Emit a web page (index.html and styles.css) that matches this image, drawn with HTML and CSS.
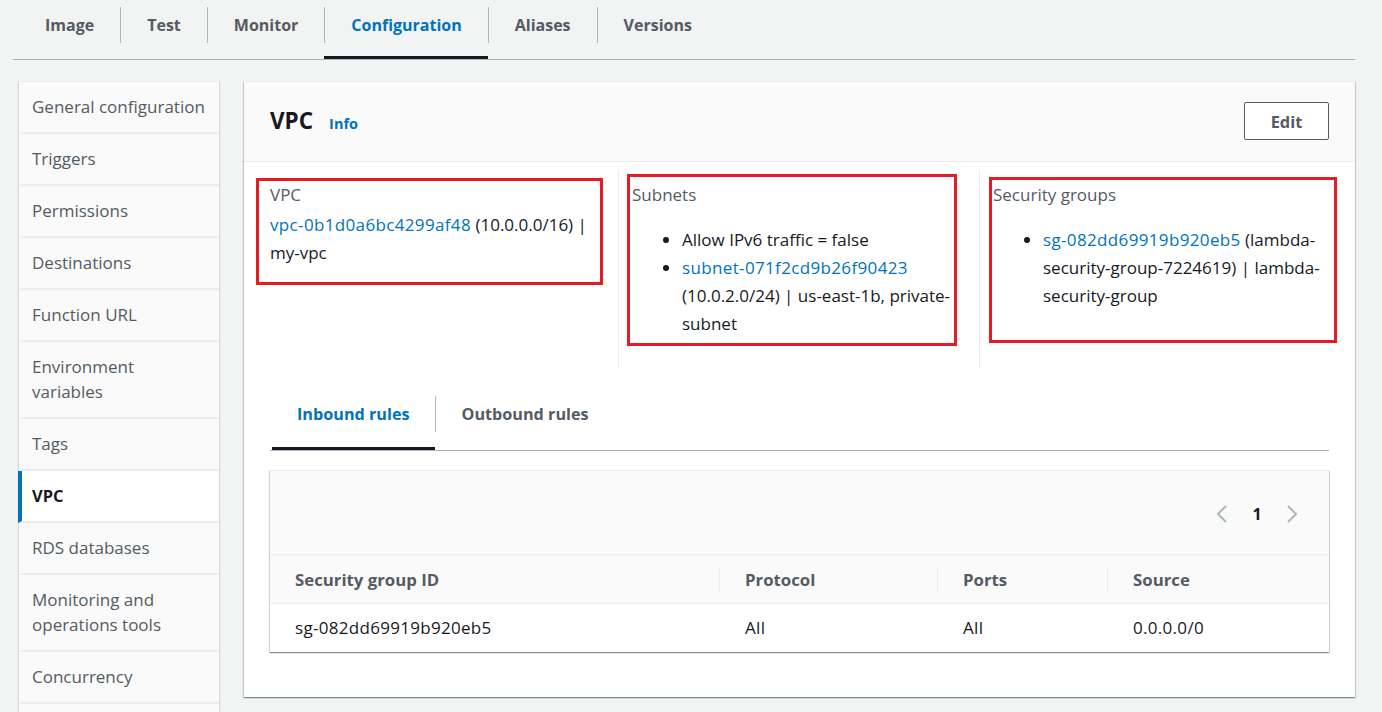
FILE: index.html
```html
<!DOCTYPE html>
<html lang="en">
<head>
<meta charset="utf-8">
<title>VPC configuration</title>
<link rel="stylesheet" href="styles.css">
</head>
<body>
<nav class="top-tabs">
  <a class="top-tab"><span class="top-tab-label">Image</span></a>
  <a class="top-tab"><span class="top-tab-label sep">Test</span></a>
  <a class="top-tab"><span class="top-tab-label sep">Monitor</span></a>
  <a class="top-tab active"><span class="top-tab-label sep">Configuration</span></a>
  <a class="top-tab"><span class="top-tab-label sep">Aliases</span></a>
  <a class="top-tab"><span class="top-tab-label sep">Versions</span></a>
</nav>

<div class="layout">
  <aside class="sidebar">
    <div class="side-item">General configuration</div>
    <div class="side-item">Triggers</div>
    <div class="side-item">Permissions</div>
    <div class="side-item">Destinations</div>
    <div class="side-item">Function URL</div>
    <div class="side-item">Environment<br>variables</div>
    <div class="side-item">Tags</div>
    <div class="side-item active">VPC</div>
    <div class="side-item">RDS databases</div>
    <div class="side-item">Monitoring and<br>operations tools</div>
    <div class="side-item">Concurrency</div>
    <div class="side-item side-item-last"></div>
  </aside>

  <main class="panel">
    <header class="panel-header">
      <div class="panel-title">
        <h2>VPC</h2>
        <a class="info">Info</a>
      </div>
      <button class="btn">Edit</button>
    </header>

    <section class="vpc-grid">
      <div class="vpc-col">
        <div class="mark mark-1">
          <div class="label">VPC</div>
          <div class="value"><a class="link">vpc-0b1d0a6bc4299af48</a> (10.0.0.0/16) | my-vpc</div>
        </div>
      </div>
      <div class="vpc-col">
        <div class="mark mark-2">
          <div class="label">Subnets</div>
          <ul class="list">
            <li>Allow IPv6 traffic = false</li>
            <li><a class="link">subnet-071f2cd9b26f90423</a> (10.0.2.0/24) | us-east-1b, private-subnet</li>
          </ul>
        </div>
      </div>
      <div class="vpc-col">
        <div class="mark mark-3">
          <div class="label">Security groups</div>
          <ul class="list">
            <li><a class="link">sg-082dd69919b920eb5</a> (lambda-security-group-7224619) | lambda-security-group</li>
          </ul>
        </div>
      </div>
    </section>

    <section class="rules">
      <nav class="rule-tabs">
        <a class="rule-tab active"><span class="rule-tab-label">Inbound rules</span></a>
        <a class="rule-tab"><span class="rule-tab-label sep">Outbound rules</span></a>
      </nav>

      <div class="table-box">
        <div class="table-tools">
          <div class="pager">
            <svg class="chev" width="12" height="18" viewBox="0 0 12 18"><polyline points="10,1 2,9 10,17" fill="none" stroke="#aab7b8" stroke-width="2"/></svg>
            <span class="page">1</span>
            <svg class="chev" width="12" height="18" viewBox="0 0 12 18"><polyline points="2,1 10,9 2,17" fill="none" stroke="#aab7b8" stroke-width="2"/></svg>
          </div>
        </div>
        <table class="rules-table">
          <thead>
            <tr>
              <th class="c1">Security group ID</th>
              <th class="c2"><span class="th-sep">Protocol</span></th>
              <th class="c3"><span class="th-sep">Ports</span></th>
              <th class="c4"><span class="th-sep">Source</span></th>
            </tr>
          </thead>
          <tbody>
            <tr>
              <td>sg-082dd69919b920eb5</td>
              <td>All</td>
              <td>All</td>
              <td>0.0.0.0/0</td>
            </tr>
          </tbody>
        </table>
      </div>
    </section>
  </main>
</div>
</body>
</html>
```

FILE: styles.css
```css
* { box-sizing: border-box; }

html, body {
  margin: 0;
  padding: 0;
  height: 712px;
  overflow: hidden;
}

body {
  background: #f2f3f3;
  font-family: "Open Sans", "Noto Sans", sans-serif;
  font-size: 17px;
  color: #16191f;
}

a { text-decoration: none; cursor: pointer; }

/* top tabs */
.top-tabs {
  display: flex;
  margin: 0 27px 0 13px;
  padding-left: 5px;
  height: 60px;
  border-bottom: 1px solid #aab7b8;
}

.top-tab {
  display: block;
  padding: 7px 0 16px;
  color: #545b64;
  font-weight: 700;
  font-size: 16px;
}

.top-tab-label {
  display: block;
  padding: 0 26px;
  line-height: 36px;
  border-left: 1px solid transparent;
}

.top-tab-label.sep { border-left-color: #aab7b8; }

.top-tab.active {
  color: #0073bb;
  box-shadow: inset 0 -3px 0 #16191f;
}

/* layout */
.layout {
  display: flex;
  align-items: flex-start;
  gap: 24px;
  padding: 21px 27px 0 18px;
}

.sidebar {
  flex: 0 0 202px;
  background: #fafafa;
  border: 1px solid #d5dbdb;
  border-top-color: #eaeded;
  box-shadow: 0 1px 1px rgba(0, 28, 36, 0.15);
}

.side-item {
  padding: 12px 10px 13px 10px;
  line-height: 25px;
  color: #545b64;
  border-bottom: 2px solid #eaeded;
  border-left: 4px solid transparent;
  margin-left: -1px;
}

.side-item-last { height: 52px; }

.side-item.active {
  background: #ffffff;
  color: #16191f;
  font-weight: 700;
  font-size: 16.4px;
  border-left-color: #0073bb;
}

/* panel */
.panel {
  flex: 1 1 auto;
  background: #ffffff;
  border-top: 1px solid #eaeded;
  box-shadow: 0 1px 1px 0 rgba(0, 28, 36, 0.3), 1px 1px 1px 0 rgba(0, 28, 36, 0.15), -1px 1px 1px 0 rgba(0, 28, 36, 0.15);
  padding-bottom: 45px;
}

.panel-header {
  display: flex;
  align-items: center;
  justify-content: space-between;
  height: 80px;
  padding: 0 26px;
  background: #fafafa;
  border-bottom: 1px solid #eaeded;
}

.panel-title {
  display: flex;
  align-items: baseline;
  gap: 16px;
  margin-top: -1px;
}

.panel-title h2 {
  margin: 0;
  font-size: 22.5px;
  line-height: 28px;
  font-weight: 700;
  color: #16191f;
}

.info {
  color: #0073bb;
  font-weight: 700;
  font-size: 14.5px;
}

.btn {
  width: 85px;
  height: 38px;
  margin-top: -1px;
  background: #ffffff;
  border: 1px solid #545b64;
  border-radius: 2px;
  font-family: inherit;
  font-size: 16.4px;
  font-weight: 700;
  color: #545b64;
}

/* vpc details */
.vpc-grid {
  display: grid;
  grid-template-columns: 362px 361px 1fr;
  padding: 8px 12px 0;
}

.vpc-col {
  padding-bottom: 22px;
}

.vpc-col + .vpc-col {
  border-left: 1px solid #eaeded;
}

.mark {
  border: 3px solid #e41c23;
  line-height: 28px;
}

.mark-1 { margin: 8px 15px 0 0; padding: 0 6px 15px 11px; }
.mark-2 { margin: 4px 22px 0 8px; padding: 4px 0 5px 2px; }
.mark-3 { margin: 7px 6px 0 9px; padding: 1px 4px 30px 1px; }

.label {
  color: #545b64;
  margin-bottom: 2px;
}

.link {
  color: #0073bb;
  letter-spacing: 0.35px;
}

.list {
  margin: 17px 0 0;
  padding-left: 50px;
}

.list li { line-height: 28px; }

/* rules */
.rules {
  padding: 0 26px;
}

.rule-tabs {
  display: flex;
  border-bottom: 1px solid #aab7b8;
}

.rule-tab {
  display: block;
  padding: 28px 0 18px;
  color: #545b64;
  font-weight: 700;
  font-size: 16.2px;
}

.rule-tab:first-child { margin-left: 2px; }

.rule-tab-label {
  display: block;
  padding: 0 25px 0 24px;
  line-height: 36px;
  border-left: 1px solid transparent;
}

.rule-tab-label.sep {
  border-left-color: #aab7b8;
  padding-left: 26px;
}

.rule-tab.active {
  color: #0073bb;
  box-shadow: inset 0 -3px 0 #16191f;
}

.table-box {
  margin-top: 19px;
  background: #ffffff;
  border-top: 1px solid #eaeded;
  box-shadow: 0 1px 1px 0 rgba(0, 28, 36, 0.3), 1px 1px 1px 0 rgba(0, 28, 36, 0.15), -1px 1px 1px 0 rgba(0, 28, 36, 0.15);
}

.table-tools {
  display: flex;
  justify-content: flex-end;
  align-items: center;
  height: 83px;
  padding: 2px 31px 0 0;
  background: #fafafa;
}

.pager {
  display: flex;
  align-items: center;
}

.chev { display: block; }

.page {
  font-weight: 700;
  width: 58px;
  text-align: center;
  font-size: 16px;
}

.rules-table {
  width: 100%;
  border-collapse: collapse;
}

.rules-table th {
  background: #fafafa;
  text-align: left;
  font-weight: 700;
  font-size: 16.8px;
  color: #545b64;
  height: 49px;
  padding: 0;
  border-top: 1px solid #eaeded;
  border-bottom: 1px solid #eaeded;
}

.rules-table th.c1 { width: 449px; padding-left: 25px; }
.rules-table th.c2 { width: 218px; }
.rules-table th.c3 { width: 170px; }

.th-sep {
  display: block;
  border-left: 1px solid #eaeded;
  padding-left: 25px;
  line-height: 25px;
}

.rules-table td {
  height: 48px;
  padding: 0 0 0 26px;
  line-height: 24px;
  letter-spacing: 0.3px;
}

.rules-table td:first-child { padding-left: 25px; }
```
